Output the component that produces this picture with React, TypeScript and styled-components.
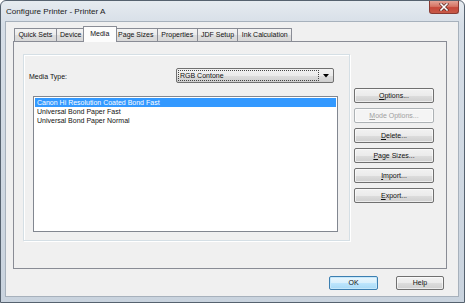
import React from 'react';
import styled, { createGlobalStyle } from 'styled-components';

const Global = createGlobalStyle`
  html, body { margin: 0; padding: 0; background: #ffffff; }
  body { font-family: "Liberation Sans", Arial, sans-serif; }
  * { box-sizing: border-box; }
`;

const Window = styled.div`
  width: 465px;
  height: 303px;
  border: 1px solid #56626f;
  border-radius: 6px 6px 0 0;
  background: linear-gradient(180deg, #e6ebf0 0%, #d6dee7 8%, #cfd8e2 60%, #c9d3de 100%);
  padding: 0 5px 5px 4px;
  display: flex;
  flex-direction: column;
`;

const TitleBar = styled.div`
  height: 20px;
  display: flex;
  align-items: flex-start;
`;

const Title = styled.div`
  flex: 1;
  padding: 6px 0 0 1px;
  font-size: 8.1px;
  line-height: 9px;
  color: #1a1a1a;
`;

const CloseButton = styled.div`
  width: 30px;
  height: 13px;
  border: 1px solid #8a3b33;
  border-top: none;
  border-radius: 0 0 3px 3px;
  background: linear-gradient(180deg, #e3a396 0%, #d67565 45%, #c6483a 55%, #c85a48 100%);
  display: flex;
  align-items: center;
  justify-content: center;
`;

const Client = styled.div`
  flex: 1;
  background: #f0f0f0;
  border: 1px solid #a7b1bc;
  padding: 4px 11px 6px 7px;
  display: flex;
  flex-direction: column;
  font-size: 7px;
  color: #111;
`;

const TabStrip = styled.div`
  height: 15px;
  display: flex;
  align-items: flex-end;
  padding-left: 2px;
  position: relative;
  z-index: 1;
`;

const Tab = styled.div<{ $active?: boolean }>`
  height: ${(p) => (p.$active ? 16 : 13)}px;
  margin-bottom: ${(p) => (p.$active ? -1 : 0)}px;
  margin-left: ${(p) => (p.$active ? -3 : -1)}px;
  margin-right: ${(p) => (p.$active ? -2 : 0)}px;
  padding: 0 ${(p) => (p.$active ? 6.4 : 3.4)}px;
  border: 1px solid #898c95;
  border-bottom: none;
  border-radius: 1px 1px 0 0;
  background: ${(p) =>
    p.$active
      ? '#fcfcfc'
      : 'linear-gradient(180deg, #f3f3f3 0%, #ebebeb 50%, #dddddd 51%, #d8d8d8 100%)'};
  line-height: ${(p) => (p.$active ? 14 : 12)}px;
  white-space: nowrap;
  position: relative;
  z-index: ${(p) => (p.$active ? 2 : 1)};
  &:first-child { margin-left: -1px; }
`;

const Panel = styled.div`
  height: 228px;
  border: 1px solid #898c95;
  background: #f0f0f0;
  padding: 12px 0 0 9px;
  display: flex;
  align-items: flex-start;
`;

const Group = styled.div`
  width: 327px;
  height: 187px;
  border: 1px solid #d5dfe5;
  box-shadow: inset 1px 1px 0 #ffffff, 1px 1px 0 #ffffff;
  padding: 13px 11px 8px 5px;
  display: flex;
  flex-direction: column;
`;

const FieldRow = styled.div`
  height: 15px;
  display: flex;
  align-items: center;
`;

const Label = styled.span`
  padding-top: 1px;
`;

const Combo = styled.div`
  margin-left: auto;
  margin-right: 4px;
  width: 158px;
  height: 15px;
  border: 1px solid #707070;
  border-radius: 2px;
  background: linear-gradient(180deg, #f2f2f2 0%, #ebebeb 50%, #dddddd 51%, #cfcfcf 100%);
  display: flex;
  align-items: center;
  padding: 1px;
`;

const ComboValue = styled.div`
  flex: 1;
  height: 11px;
  border: 1px dotted #444;
  padding-left: 1px;
  line-height: 10px;
`;

const ComboArrow = styled.div`
  width: 13px;
  display: flex;
  justify-content: center;
  align-items: center;
`;

const ListBox = styled.div`
  margin: 13px 0 0 4px;
  height: 136px;
  border: 1px solid #828790;
  background: #ffffff;
  padding: 1px;
  display: flex;
  flex-direction: column;
`;

const ListItem = styled.div<{ $selected?: boolean }>`
  height: 9px;
  line-height: 9px;
  padding-left: 2px;
  white-space: nowrap;
  background: ${(p) => (p.$selected ? '#3399ff' : 'transparent')};
  color: ${(p) => (p.$selected ? '#ffffff' : '#111111')};
`;

const ButtonColumn = styled.div`
  margin: 34px 0 0 4px;
  display: flex;
  flex-direction: column;
  gap: 5px;
`;

const Button = styled.div<{ $width?: number; $disabled?: boolean; $default?: boolean }>`
  width: ${(p) => p.$width ?? 80}px;
  height: ${(p) => (p.$default !== undefined ? 14 : 15)}px;
  border: 1px solid ${(p) => (p.$disabled ? '#adb2b5' : p.$default ? '#3c7fb1' : '#707070')};
  border-radius: 2px;
  background: ${(p) =>
    p.$disabled
      ? '#f4f4f4'
      : p.$default
      ? 'linear-gradient(180deg, #eaf6fd 0%, #d9f0fc 50%, #bee6fd 51%, #a7d9f5 100%)'
      : 'linear-gradient(180deg, #f2f2f2 0%, #ebebeb 50%, #dddddd 51%, #cfcfcf 100%)'};
  box-shadow: ${(p) => (p.$default ? 'inset 0 0 0 1px #c6e8fb' : 'inset 0 0 0 1px rgba(255,255,255,0.6)')};
  color: ${(p) => (p.$disabled ? '#a0a0a0' : '#111111')};
  display: flex;
  align-items: center;
  justify-content: center;
  white-space: nowrap;
  line-height: 10px;
  u { text-decoration-thickness: 1px; text-underline-offset: 0.5px; }
`;

const Footer = styled.div`
  margin-top: 7px;
  display: flex;
  justify-content: flex-end;
  gap: 18px;
  padding-right: 3px;
`;

const tabs = ['Quick Sets', 'Device', 'Media', 'Page Sizes', 'Properties', 'JDF Setup', 'Ink Calculation'];

const media = [
  'Canon Hi Resolution Coated Bond Fast',
  'Universal Bond Paper Fast',
  'Universal Bond Paper Normal',
];

const sideButtons: { key: string; ul: string; rest: string; disabled?: boolean }[] = [
  { key: 'options', ul: 'O', rest: 'ptions...' },
  { key: 'mode', ul: 'M', rest: 'ode Options...', disabled: true },
  { key: 'delete', ul: 'D', rest: 'elete...' },
  { key: 'pagesizes', ul: 'P', rest: 'age Sizes...' },
  { key: 'import', ul: 'I', rest: 'mport...' },
  { key: 'export', ul: 'E', rest: 'xport...' },
];

export default function App() {
  return (
    <>
      <Global />
      <Window>
        <TitleBar>
          <Title>Configure Printer - Printer A</Title>
          <CloseButton>
            <svg width="10" height="8" viewBox="0 0 10 8">
              <path d="M2 1 L8 7 M8 1 L2 7" stroke="#5a2a24" strokeWidth="3" strokeLinecap="square" />
              <path d="M2 1 L8 7 M8 1 L2 7" stroke="#ffffff" strokeWidth="1.6" strokeLinecap="square" />
            </svg>
          </CloseButton>
        </TitleBar>
        <Client>
          <TabStrip>
            {tabs.map((t) => (
              <Tab key={t} $active={t === 'Media'}>
                {t}
              </Tab>
            ))}
          </TabStrip>
          <Panel>
            <Group>
              <FieldRow>
                <Label>Media Type:</Label>
                <Combo>
                  <ComboValue>RGB Contone</ComboValue>
                  <ComboArrow>
                    <svg width="6" height="4" viewBox="0 0 6 4">
                      <path d="M0 0 H6 L3 3.5 Z" fill="#000" />
                    </svg>
                  </ComboArrow>
                </Combo>
              </FieldRow>
              <ListBox>
                {media.map((m, i) => (
                  <ListItem key={m} $selected={i === 0}>
                    {m}
                  </ListItem>
                ))}
              </ListBox>
            </Group>
            <ButtonColumn>
              {sideButtons.map((b) => (
                <Button key={b.key} $disabled={b.disabled}>
                  <span>
                    <u>{b.ul}</u>
                    {b.rest}
                  </span>
                </Button>
              ))}
            </ButtonColumn>
          </Panel>
          <Footer>
            <Button $width={49} $default>
              OK
            </Button>
            <Button $width={48} $default={false}>
              Help
            </Button>
          </Footer>
        </Client>
      </Window>
    </>
  );
}
